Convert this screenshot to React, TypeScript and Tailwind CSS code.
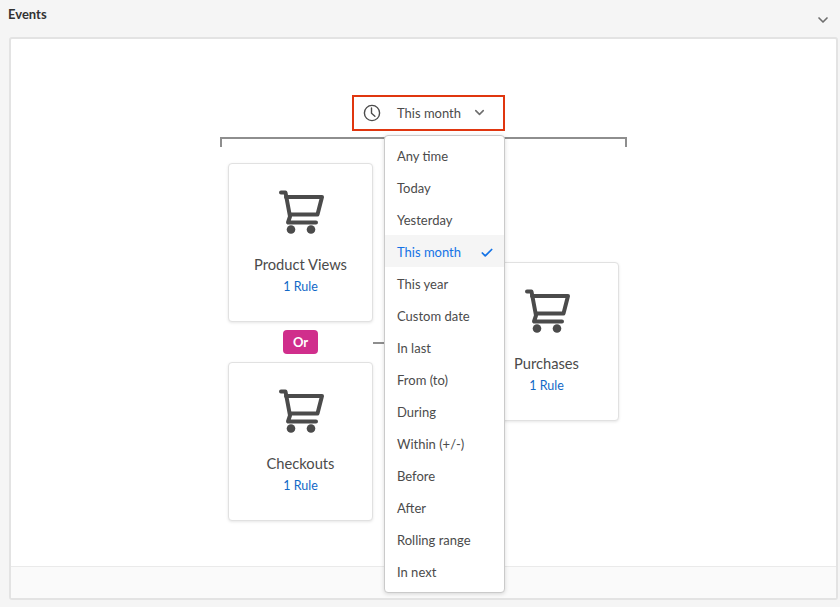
import { Check, ChevronDown } from 'lucide-react';

const ranges = [
  'Any time',
  'Today',
  'Yesterday',
  'This month',
  'This year',
  'Custom date',
  'In last',
  'From (to)',
  'During',
  'Within (+/-)',
  'Before',
  'After',
  'Rolling range',
  'In next',
];

function CartIcon() {
  return (
    <svg className="ml-[1px]" width="45" height="45" viewBox="0 0 45 45" fill="none" stroke="#4b4b4b" strokeWidth="4" strokeLinecap="round" strokeLinejoin="round">
      <path d="M2 2.5h4.5L11 26.5 9 32.5h28" />
      <path d="M7 7h36l-4.5 17.5H11" />
      <circle cx="12" cy="39.5" r="4.3" fill="#4b4b4b" stroke="none" />
      <circle cx="32" cy="39.5" r="4.3" fill="#4b4b4b" stroke="none" />
    </svg>
  );
}

function EventCard({ title, className = '' }: { title: string; className?: string }) {
  return (
    <div className={`w-[145px] h-[159px] bg-white border border-[#e1e1e1] rounded shadow-[0_1px_3px_rgba(0,0,0,0.1)] flex flex-col items-center pt-[26px] ${className}`}>
      <CartIcon />
      <div className="mt-[19px] text-[14.7px] leading-[20px] text-[#4b4b4b]">{title}</div>
      <div className="mt-[4px] text-[12.5px] leading-[18px] text-[#1269c7]">1 Rule</div>
    </div>
  );
}

export default function App() {
  return (
    <div className="h-[607px] w-[840px] overflow-hidden bg-[#f5f5f5] flex flex-col font-['Lato',sans-serif]">
      {/* Header */}
      <div className="h-[37px] shrink-0 flex justify-between pl-2 pr-[9px]">
        <span className="pt-[5px] text-[13px] leading-[18px] font-bold text-[#323232]">Events</span>
        <ChevronDown className="mt-[12px] text-[#6e6e6e]" size={16} strokeWidth={2.5} />
      </div>

      {/* Panel */}
      <div className="flex-1 ml-[9px] mr-[2px] mb-[7px] bg-white border-2 border-[#e3e3e3] rounded-[3px] flex flex-col">
        <div className="flex-1 pt-[56px] pl-[209px]">
          <div className="w-[407px]">
            {/* Date filter */}
            <div className="relative ml-[132px] w-[153px]">
              <button className="w-full h-[36px] border-2 border-[#e0360f] bg-white flex items-center pl-[9px] text-[13px] text-[#4b4b4b]">
                <svg className="-mt-[1px]" width="18" height="18" viewBox="0 0 18 18" fill="none" stroke="#4b4b4b" strokeWidth="1.4" strokeLinecap="round" strokeLinejoin="round">
                  <circle cx="9" cy="9" r="7.6" />
                  <path d="M8.5 4v5.2l3.4 3" />
                </svg>
                <span className="ml-[16px] pt-[2px]">This month</span>
                <ChevronDown className="ml-[11px] -mt-[1px] text-[#6e6e6e]" size={15} strokeWidth={2.5} />
              </button>

              <div className="absolute z-10 right-0 top-full mt-[4px] w-[121px] bg-white border border-[#cacaca] rounded shadow-[0_1px_4px_rgba(0,0,0,0.15)] pt-[3px] pb-[5px]">
                {ranges.map((range) => (
                  <div
                    key={range}
                    className={`h-[32px] flex items-center justify-between pt-[4px] pl-3 pr-[10px] text-[13px] ${
                      range === 'This month' ? 'bg-[#f5f5f5] text-[#1473e6]' : 'text-[#4b4b4b]'
                    }`}
                  >
                    {range}
                    {range === 'This month' && <Check size={14} strokeWidth={3} />}
                  </div>
                ))}
              </div>
            </div>

            {/* Bracket */}
            <div className="mt-[6px] h-[10px] border-t-2 border-x-2 border-[#8e8e8e]" />

            {/* Cards */}
            <div className="mt-[16px] ml-2 flex items-center">
              <div className="flex flex-col items-center gap-2">
                <EventCard title="Product Views" />
                <span className="w-[35px] h-[24px] pt-[1px] rounded bg-[#d02e8c] text-white text-[13px] font-bold flex items-center justify-center">
                  Or
                </span>
                <EventCard title="Checkouts" />
              </div>
              <div className="w-[101px] h-[2px] mt-[2px] bg-[#8e8e8e]" />
              <EventCard title="Purchases" className="-mt-[2px]" />
            </div>
          </div>
        </div>

        {/* Footer */}
        <div className="h-[32px] shrink-0 bg-[#fafafa] border-t border-[#eaeaea]" />
      </div>
    </div>
  );
}
